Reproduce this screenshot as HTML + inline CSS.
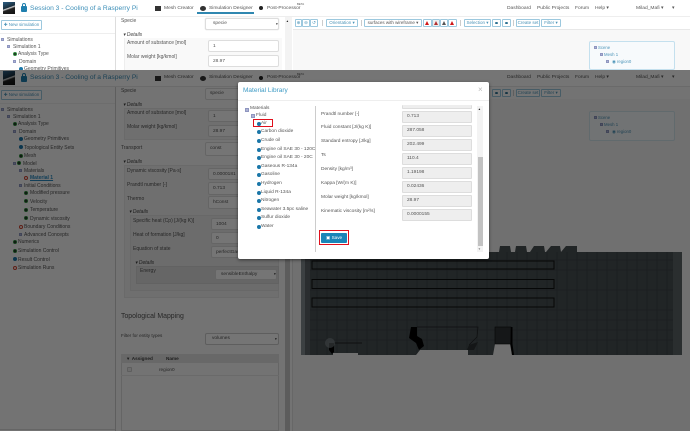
<!DOCTYPE html>
<html><head><meta charset="utf-8">
<style>
html,body{margin:0;padding:0;background:#fff}
#p{position:relative;width:690px;height:431px;overflow:hidden;background:#fff;font-family:"Liberation Sans",sans-serif;color:#555;filter:blur(.35px)}
#p div,#p span.t{position:absolute}
.t{white-space:nowrap;line-height:0;font-size:5px;color:#555}
.b{border:1px solid #9cc8de;background:#fff;box-sizing:border-box;border-radius:1px;height:8px;color:#4c94b8;font-size:4.5px;line-height:6px;text-align:center;white-space:nowrap;overflow:hidden}
.i{border:1px solid #ddd;background:#fff;box-sizing:border-box;border-radius:2px;font-size:4.8px;color:#555;white-space:nowrap;overflow:hidden;padding-left:4px}
.g{width:4px;height:4px;border-radius:50%;box-sizing:border-box;border:1.2px solid #2e8b3c;background:#222}
.bl{width:4px;height:4px;border-radius:50%;background:#1a76a8}
.r{width:4px;height:4px;border-radius:50%;box-sizing:border-box;border:1px solid #d0432f;background:transparent}
.s{width:3px;height:3px;background:#aeb4d4;border:.5px solid #8f96c0;box-sizing:border-box}
.f{border:1px solid #ddd;background:#eee;box-sizing:border-box;border-radius:1px;left:402px;width:70px;height:12px;font-size:4.8px;line-height:10px;color:#555;padding-left:4px}
.rd{border:1.5px solid #e0101c;box-sizing:border-box}
.tri{width:0;height:0;border-left:2.5px solid transparent;border-right:2.5px solid transparent;border-bottom:4px solid #d01818}
.dot{width:3px;height:2px;border-radius:50%;background:#2a6f90}
</style></head><body>
<div id="p">
<!-- shared top -->
<div style="left:0;top:0;width:690px;height:17px;background:#fff;border-bottom:1px solid #eee;box-sizing:border-box"></div>
<div style="left:3px;top:2px;width:12px;height:12px;background:linear-gradient(160deg,#2c5f86 0,#1a2e3c 45%,#ddd 50%,#222 60%,#111 100%)"></div>
<div style="left:21px;top:6px;width:6px;height:6px;background:#1f7fae;border-radius:1px"></div>
<div style="left:22px;top:3px;width:4px;height:4px;border:1px solid #1f7fae;border-bottom:0;box-sizing:border-box;border-radius:2px 2px 0 0"></div>
<span class="t" style="left:30px;top:8.5px;font-size:6.7px;color:#3d8fb8">Session 3 - Cooling of a Rasperry Pi</span>
<div style="left:155px;top:6px;width:6px;height:5px;background:#333"></div>
<span class="t" style="left:164px;top:8.5px;font-size:4.9px">Mesh Creator</span>
<div style="left:200px;top:6px;width:6px;height:5px;background:#333;border-radius:50%"></div>
<span class="t" style="left:209px;top:8.5px;font-size:4.9px">Simulation Designer</span>
<div style="left:197px;top:12px;width:57px;height:1.5px;background:#2f87b0"></div>
<div style="left:259px;top:6px;width:4px;height:4px;background:#222;border-radius:50%"></div>
<span class="t" style="left:267px;top:8.5px;font-size:4.9px">Post-Processor</span>
<span class="t" style="left:297px;top:3.5px;font-size:2.8px">BETA</span>
<span class="t" style="left:507px;top:8.5px;font-size:4.9px">Dashboard</span>
<span class="t" style="left:537px;top:8.5px;font-size:4.9px">Public Projects</span>
<span class="t" style="left:575px;top:8.5px;font-size:4.9px">Forum</span>
<span class="t" style="left:595px;top:8.5px;font-size:4.9px">Help ▾</span>
<span class="t" style="left:636px;top:8.5px;font-size:4.9px">Milad_Mafi ▾</span>
<span class="t" style="left:672px;top:8.5px;font-size:4.9px">▾</span>

<!-- upper panels -->
<div style="left:115px;top:17px;width:1px;height:53px;background:#ddd"></div>
<div style="left:0;top:33px;width:115px;height:1px;background:#eee"></div>
<div class="b" style="left:1px;top:20px;width:41px;height:10px;line-height:8px">✚ New simulation</div>
<div class="s" style="left:1px;top:38px"></div><span class="t" style="left:7px;top:40px">Simulations</span>
<div class="s" style="left:7px;top:45px"></div><span class="t" style="left:13px;top:46.5px">Simulation 1</span>
<div class="g" style="left:13px;top:52px"></div><span class="t" style="left:18px;top:54px">Analysis Type</span>
<div class="s" style="left:13px;top:60px"></div><span class="t" style="left:19px;top:61.5px">Domain</span>
<div class="bl" style="left:19px;top:67px"></div><span class="t" style="left:24px;top:69px">Geometry Primitives</span>
<span class="t" style="left:121px;top:21px">Specie</span>
<div class="i" style="left:205px;top:18px;width:74px;height:12px;line-height:10px;padding-left:2px;box-shadow:0 0 1px #ccc"><span style="margin-left:5px">specie</span></div>
<span class="t" style="left:276px;top:24px;font-size:3.5px;color:#222">▾</span>
<span class="t" style="left:123px;top:35px;font-style:italic;color:#444">▾ Details</span>
<div style="left:124px;top:38px;width:157px;height:32px;background:#f9f9f9;border-left:1px solid #eee"></div>
<span class="t" style="left:127px;top:43px">Amount of substance [mol]</span>
<div class="i" style="left:208px;top:40px;width:71px;height:12px;line-height:11px">1</div>
<span class="t" style="left:127px;top:57px">Molar weight [kg/kmol]</span>
<div class="i" style="left:208px;top:55px;width:71px;height:12px;line-height:11px">28.97</div>
<div style="left:285px;top:17px;width:7px;height:53px;background:#f3f3f3"></div>
<span class="t" style="left:286.5px;top:21px;font-size:3.5px;color:#222">▴</span>
<div style="left:293px;top:29px;width:397px;height:41px;background:#f8f8f8;border-top:1px solid #e8e8e8"></div>

<!-- toolbar -->
<div class="b" style="left:295px;top:19px;width:7px">⊕</div>
<div class="b" style="left:302px;top:19px;width:8px">⊖</div>
<div class="b" style="left:310px;top:19px;width:8px">↺</div>
<div style="left:322px;top:20px;width:1px;height:6px;background:#ccc"></div>
<div class="b" style="left:326px;top:19px;width:32px">Orientation ▾</div>
<div style="left:361px;top:20px;width:1px;height:6px;background:#ccc"></div>
<div class="b" style="left:364px;top:19px;width:58px;color:#555">surfaces with wireframe ▾</div>
<div class="b" style="left:423px;top:19px;width:9px"></div><div class="tri" style="left:425px;top:21px"></div>
<div class="b" style="left:432px;top:19px;width:8px;background:#eee"></div><div class="tri" style="left:433.500px;top:21px;border-bottom-color:#b03030"></div>
<div class="b" style="left:440px;top:19px;width:8px"></div><div class="tri" style="left:441.500px;top:21px;border-bottom-color:#555"></div>
<div class="b" style="left:448px;top:19px;width:9px"></div><div class="tri" style="left:450px;top:21px"></div>
<div style="left:460px;top:20px;width:1px;height:6px;background:#ccc"></div>
<div class="b" style="left:464px;top:19px;width:27px">Selection ▾</div>
<div class="b" style="left:492px;top:19px;width:9px"></div><div class="dot" style="left:495px;top:22px"></div>
<div class="b" style="left:502px;top:19px;width:9px"></div><div class="dot" style="left:505px;top:22px"></div>
<div style="left:513px;top:20px;width:1px;height:6px;background:#ccc"></div>
<div class="b" style="left:516px;top:19px;width:24px">Create set</div>
<div class="b" style="left:541px;top:19px;width:20px">Filter ▾</div>
<!-- scene -->
<div style="left:589px;top:41px;width:86px;height:29px;background:#f7fafc;border:1px solid #c4e0ee;box-sizing:border-box;border-radius:2px"></div>
<div class="s" style="left:594px;top:46px"></div><span class="t" style="left:598px;top:48px;font-size:4.3px;color:#4c94b8">Scene</span>
<div class="s" style="left:600px;top:53px"></div><span class="t" style="left:604px;top:55px;font-size:4.3px;color:#4c94b8">Mesh 1</span>
<div class="s" style="left:606px;top:60px"></div><span class="t" style="left:612px;top:62px;font-size:4.3px;color:#4c94b8">◉ region0</span>

<!-- lower layer base -->
<div style="left:0;top:70px;width:690px;height:361px;background:#fbfbfb"></div>
<div style="left:0;top:70px;width:690px;height:17px;background:#fff;border-bottom:1px solid #e8e8e8;box-sizing:border-box"></div>
<div style="left:3px;top:71px;width:12px;height:14px;background:linear-gradient(160deg,#2c5f86 0,#1a2e3c 45%,#ddd 50%,#222 60%,#111 100%)"></div>
<div style="left:21px;top:76px;width:6px;height:6px;background:#1f7fae;border-radius:1px"></div>
<div style="left:22px;top:73px;width:4px;height:4px;border:1px solid #1f7fae;border-bottom:0;box-sizing:border-box;border-radius:2px 2px 0 0"></div>
<span class="t" style="left:30px;top:78px;font-size:6.7px;color:#3d8fb8">Session 3 - Cooling of a Rasperry Pi</span>
<div style="left:155px;top:76px;width:6px;height:5px;background:#333"></div>
<span class="t" style="left:164px;top:78px;font-size:4.9px">Mesh Creator</span>
<div style="left:200px;top:76px;width:6px;height:5px;background:#333;border-radius:50%"></div>
<span class="t" style="left:209px;top:78px;font-size:4.9px">Simulation Designer</span>
<div style="left:259px;top:76px;width:4px;height:4px;background:#222;border-radius:50%"></div>
<span class="t" style="left:267px;top:78px;font-size:4.9px">Post-Processor</span>
<span class="t" style="left:297px;top:73.5px;font-size:2.8px">BETA</span>
<span class="t" style="left:507px;top:78px;font-size:4.9px">Dashboard</span>
<span class="t" style="left:537px;top:78px;font-size:4.9px">Public Projects</span>
<span class="t" style="left:575px;top:78px;font-size:4.9px">Forum</span>
<span class="t" style="left:595px;top:78px;font-size:4.9px">Help ▾</span>
<span class="t" style="left:636px;top:78px;font-size:4.9px">Milad_Mafi ▾</span>
<span class="t" style="left:672px;top:78px;font-size:4.9px">▾</span>
<div style="left:115px;top:87px;width:1px;height:344px;background:#ccc"></div>
<div style="left:0;top:103px;width:115px;height:1px;background:#eee"></div>
<div style="left:0;top:429px;width:115px;height:1px;background:#ddd"></div>
<div class="b" style="left:1px;top:90px;width:41px;height:10px;line-height:8px">✚ New simulation</div>

<!-- lower tree -->
<div class="s" style="left:1px;top:108px"></div><span class="t" style="left:7px;top:109.5px">Simulations</span>
<div class="s" style="left:7px;top:115px"></div><span class="t" style="left:13px;top:116.5px">Simulation 1</span>
<div class="g" style="left:13px;top:122px"></div><span class="t" style="left:18px;top:124px">Analysis Type</span>
<div class="s" style="left:13px;top:130px"></div><span class="t" style="left:19px;top:131.5px">Domain</span>
<div class="bl" style="left:19px;top:137px"></div><span class="t" style="left:24px;top:139px">Geometry Primitives</span>
<div class="bl" style="left:19px;top:145px"></div><span class="t" style="left:24px;top:147.5px">Topological Entity Sets</span>
<div class="g" style="left:19px;top:154px"></div><span class="t" style="left:24px;top:156px">Mesh</span>
<div class="s" style="left:13px;top:162px"></div><div class="g" style="left:17px;top:161px"></div><span class="t" style="left:23px;top:163.5px">Model</span>
<div class="s" style="left:19px;top:169px"></div><span class="t" style="left:24px;top:170.5px">Materials</span>
<div class="r" style="left:24px;top:176px"></div><span class="t" style="left:30px;top:178px;font-weight:bold;color:#2a8ac0;text-decoration:underline">Material 1</span>
<div class="s" style="left:19px;top:184px"></div><span class="t" style="left:24px;top:185.5px">Initial Conditions</span>
<div class="g" style="left:24px;top:191px"></div><span class="t" style="left:30px;top:193px">Modified pressure</span>
<div class="g" style="left:24px;top:199px"></div><span class="t" style="left:30px;top:201.5px">Velocity</span>
<div class="g" style="left:24px;top:208px"></div><span class="t" style="left:30px;top:210px">Temperature</span>
<div class="g" style="left:24px;top:216px"></div><span class="t" style="left:30px;top:218.5px">Dynamic viscosity</span>
<div class="r" style="left:19px;top:225px"></div><span class="t" style="left:24px;top:227px">Boundary Conditions</span>
<div class="s" style="left:19px;top:233px"></div><span class="t" style="left:24px;top:234.5px">Advanced Concepts</span>
<div class="g" style="left:13px;top:240px"></div><span class="t" style="left:18px;top:242px">Numerics</span>
<div class="g" style="left:13px;top:249px"></div><span class="t" style="left:18px;top:251px">Simulation Control</span>
<div class="bl" style="left:13px;top:257px"></div><span class="t" style="left:18px;top:259.5px">Result Control</span>
<div class="r" style="left:13px;top:266px"></div><span class="t" style="left:18px;top:268px">Simulation Runs</span>

<!-- lower mid panel -->
<span class="t" style="left:121px;top:91px">Specie</span>
<div class="i" style="left:205px;top:88px;width:74px;height:12px;line-height:10px">specie</div>
<span class="t" style="left:123px;top:104.5px;font-style:italic;color:#444">▾ Details</span>
<div style="left:124px;top:108px;width:157px;height:32px;background:#f2f2f2;border:1px solid #e8e8e8;box-sizing:border-box"></div>
<span class="t" style="left:127px;top:113px">Amount of substance [mol]</span>
<div class="i" style="left:208px;top:110px;width:71px;height:12px;line-height:11px">1</div>
<span class="t" style="left:127px;top:127px">Molar weight [kg/kmol]</span>
<div class="i" style="left:208px;top:125px;width:71px;height:12px;line-height:11px">28.97</div>
<span class="t" style="left:121px;top:148px">Transport</span>
<div class="i" style="left:205px;top:142px;width:74px;height:14px;line-height:12px">const</div>
<span class="t" style="left:123px;top:162px;font-style:italic;color:#444">▾ Details</span>
<div style="left:124px;top:165px;width:155px;height:133px;background:#f2f2f2;border:1px solid #e8e8e8;box-sizing:border-box"></div>
<span class="t" style="left:127px;top:171px">Dynamic viscosity [Pa·s]</span>
<div class="i" style="left:208px;top:168px;width:71px;height:12px;line-height:11px">0.0000181</div>
<span class="t" style="left:127px;top:185px">Prandtl number [-]</span>
<div class="i" style="left:208px;top:182px;width:71px;height:13px;line-height:11px">0.713</div>
<span class="t" style="left:127px;top:199px">Thermo</span>
<div class="i" style="left:208px;top:196px;width:71px;height:13px;line-height:11px">hConst</div>
<span class="t" style="left:129px;top:212px;font-style:italic;color:#444">▾ Details</span>
<div style="left:130px;top:215px;width:149px;height:76px;background:#ebebeb;border:1px solid #e2e2e2;box-sizing:border-box"></div>
<span class="t" style="left:133px;top:221px">Specific heat (Cp) [J/(kg K)]</span>
<div class="i" style="left:211px;top:218px;width:68px;height:12px;line-height:11px">1004</div>
<span class="t" style="left:133px;top:235px">Heat of formation [J/kg]</span>
<div class="i" style="left:211px;top:232px;width:68px;height:12px;line-height:11px">0</div>
<span class="t" style="left:133px;top:249px">Equation of state</span>
<div class="i" style="left:211px;top:246px;width:68px;height:12px;line-height:11px">perfectGas</div>
<span class="t" style="left:135px;top:263px;font-style:italic;color:#444">▾ Details</span>
<div style="left:136px;top:266px;width:143px;height:18px;background:#dedede;border:1px solid #d6d6d6;box-sizing:border-box"></div>
<span class="t" style="left:140px;top:271px">Energy</span>
<div class="i" style="left:215px;top:269px;width:62px;height:11px;line-height:9px;padding-left:5px">sensibleEnthalpy</div>
<span class="t" style="left:274px;top:274px;font-size:3.5px;color:#111">▾</span>
<span class="t" style="left:121px;top:317px;font-size:6.9px">Topological Mapping</span>
<span class="t" style="left:121px;top:336px;font-size:4.6px">Filter for entity types</span>
<div class="i" style="left:205px;top:333px;width:74px;height:12px;line-height:10px;padding-left:6px;border-color:#ccc">volumes</div>
<span class="t" style="left:275px;top:339px;font-size:3.5px;color:#111">▾</span>
<div style="left:121px;top:354px;width:158px;height:77px;background:#fafafa;border:1px solid #ddd;box-sizing:border-box"></div>
<div style="left:121px;top:354px;width:158px;height:9px;background:#e2e2e2"></div>
<span class="t" style="left:127px;top:358.5px;font-size:4.7px;font-weight:bold;color:#444">▾&nbsp; Assigned</span>
<span class="t" style="left:166px;top:358.5px;font-size:4.7px;font-weight:bold;color:#444">Name</span>
<div style="left:127px;top:367px;width:5px;height:5px;background:#eee;border:1px solid #ccc;box-sizing:border-box;border-radius:1px"></div>
<span class="t" style="left:159px;top:369.5px;font-size:4.7px">region0</span>
<div style="left:121px;top:375px;width:158px;height:1px;background:#e6e6e6"></div>
<div style="left:285px;top:87px;width:5px;height:344px;background:#c8c8c8"></div>
<div style="left:292px;top:87px;width:1px;height:344px;background:#e0e0e0"></div>
<div style="left:293px;top:99px;width:397px;height:332px;background:#f4f4f4"></div>
<!-- lower toolbar visible -->
<div class="b" style="left:492px;top:89px;width:9px"></div><div class="dot" style="left:495px;top:92px"></div>
<div class="b" style="left:502px;top:89px;width:9px"></div><div class="dot" style="left:505px;top:92px"></div>
<div style="left:513px;top:90px;width:1px;height:6px;background:#ccc"></div>
<div class="b" style="left:516px;top:89px;width:24px">Create set</div>
<div class="b" style="left:541px;top:89px;width:20px">Filter ▾</div>
<div style="left:589px;top:111px;width:86px;height:30px;background:#f7fafc;border:1px solid #d4e6ee;box-sizing:border-box;border-radius:2px"></div>
<div class="s" style="left:594px;top:116px"></div><span class="t" style="left:598px;top:118px;font-size:4.3px;color:#4c94b8">Scene</span>
<div class="s" style="left:600px;top:123px"></div><span class="t" style="left:604px;top:125px;font-size:4.3px;color:#4c94b8">Mesh 1</span>
<div class="s" style="left:606px;top:130px"></div><span class="t" style="left:612px;top:132px;font-size:4.3px;color:#4c94b8">◉ region0</span>

<!-- overlay -->
<div style="left:0;top:70px;width:690px;height:361px;background:rgba(0,0,0,.54)"></div>

<!-- 3D model -->
<svg style="position:absolute;left:0;top:0" width="690" height="431" viewBox="0 0 690 431">
<defs><clipPath id="c"><path d="M301 252H499L500 246H510L511 252H515L516 246H526L527 252H530L534 246H544L545 252H546L551 246H560L561 252H561L566 246H577V252H682V355H512L510 344H495L493 355H468V350H420L416 355H358V353H333V355H301Z"/></clipPath></defs>
<path fill="#212526" d="M301 252H499L500 246H510L511 252H515L516 246H526L527 252H530L534 246H544L545 252H546L551 246H560L561 252H561L566 246H577V252H682V355H512L510 344H495L493 355H468V350H420L416 355H358V353H333V355H301Z"/>
<g clip-path="url(#c)">
<path d="M317 252V355M327 252V355M337 252V355M347 252V355M357 252V355M367 252V355M377 252V355M387 252V355M397 252V355M407 252V355M417 252V355M427 252V355M437 252V355M447 252V355M457 252V355M467 252V355M477 252V355M487 252V355M497 252V355M507 252V355M517 252V355M527 252V355M537 252V355M547 252V355M557 252V355M567 252V355M577 252V355M587 252V355M597 252V355M607 252V355M617 252V355M627 252V355M637 252V355M647 252V355M657 252V355M667 252V355M310 260H673M310 270H673M310 290H673M310 310H673M310 320H673M310 330H673M310 340H673" stroke="#1a1d1e" stroke-width=".6" fill="none"/>
<rect x="301" y="252" width="4" height="103" fill="#3c4042"/>
<rect x="305" y="252" width="5" height="103" fill="#2a2d2f"/>
<rect x="673" y="252" width="9" height="103" fill="#2a2e2f"/>
</g>
<g fill="none" stroke="#060707" stroke-width="1">
<rect x="312" y="261" width="242" height="8"/>
<rect x="312" y="279.500" width="242" height="9"/>
<rect x="312" y="298" width="242" height="9"/>
</g>
<path d="M334 343H362" stroke="#0a0a0a" stroke-width=".8" fill="none"/>
<path d="M417 327H478L477 337L469 345" stroke="#0e0f10" stroke-width=".7" fill="none"/>
<path d="M417 327H411L409 338L416 343L419 350L424 346L422 339L417 336Z" fill="#000"/>
<path d="M469 345L467 350H474L478 342Z" fill="#141617"/>
<rect x="495" y="327" width="16" height="17" fill="#151718" stroke="#060606" stroke-width=".6"/>
<path d="M511 327H512.500V344L514 355H512L510.500 344Z" fill="#000"/>
<path d="M329 343H334V352L332 354L329 350Z" fill="#000"/>
<circle cx="330" cy="343" r="5" fill="#3e4244" opacity=".6"/>
</svg>

<!-- modal -->
<div style="left:238px;top:82px;width:251px;height:177px;background:#fff;border-radius:2px;box-shadow:0 1px 3px rgba(0,0,0,.5)"></div>
<div style="left:238px;top:100px;width:251px;height:1px;background:#eee"></div>
<span class="t" style="left:243px;top:90.5px;font-size:6.5px;color:#3d9ac4">Material Library</span>
<span class="t" style="left:478px;top:90px;font-size:8px;color:#bbb">×</span>
<div class="s" style="left:245px;top:108px;width:4px;height:4px"></div><span class="t" style="left:250px;top:109px;font-size:4.8px">Materials</span>
<div class="s" style="left:251px;top:114px;width:4px;height:4px"></div><span class="t" style="left:256px;top:115.5px;font-size:4.8px">Fluid</span>
<div class="rd" style="left:253px;top:119px;width:20px;height:8px"></div>
<div class="bl" style="left:256.500px;top:121.500px"></div><span class="t" style="left:261px;top:123.500px;font-size:4.8px">Air</span>
<div class="bl" style="left:256.500px;top:130px"></div><span class="t" style="left:261px;top:132px;font-size:4.8px">Carbon dioxide</span>
<div class="bl" style="left:256.500px;top:139px"></div><span class="t" style="left:261px;top:141px;font-size:4.8px">Crude oil</span>
<div class="bl" style="left:256.500px;top:147.500px"></div><span class="t" style="left:261px;top:149.500px;font-size:4.8px">Engine oil SAE 30 - 120C</span>
<div class="bl" style="left:256.500px;top:156px"></div><span class="t" style="left:261px;top:158px;font-size:4.8px">Engine oil SAE 30 - 20C</span>
<div class="bl" style="left:256.500px;top:165px"></div><span class="t" style="left:261px;top:167px;font-size:4.8px">Gaseous R-134a</span>
<div class="bl" style="left:256.500px;top:173px"></div><span class="t" style="left:261px;top:175px;font-size:4.8px">Gasoline</span>
<div class="bl" style="left:256.500px;top:182px"></div><span class="t" style="left:261px;top:184px;font-size:4.8px">Hydrogen</span>
<div class="bl" style="left:256.500px;top:190.500px"></div><span class="t" style="left:261px;top:192.500px;font-size:4.8px">Liquid R-134a</span>
<div class="bl" style="left:256.500px;top:199px"></div><span class="t" style="left:261px;top:201px;font-size:4.8px">Nitrogen</span>
<div class="bl" style="left:256.500px;top:208px"></div><span class="t" style="left:261px;top:210px;font-size:4.8px">Seawater 3.5pc saline</span>
<div class="bl" style="left:256.500px;top:216px"></div><span class="t" style="left:261px;top:218px;font-size:4.8px">Sulfur dioxide</span>
<div class="bl" style="left:256.500px;top:225px"></div><span class="t" style="left:261px;top:227px;font-size:4.8px">Water</span>
<div style="left:315px;top:106px;width:1px;height:146px;background:#ccc"></div>
<div class="f" style="top:105px;height:4px;border-top:0"></div>
<span class="t" style="left:321px;top:114.500px;font-size:4.8px">Prandtl number [-]</span><div class="f" style="top:111px">0.713</div>
<span class="t" style="left:321px;top:128px;font-size:4.8px">Fluid constant [J/(kg K)]</span><div class="f" style="top:125px">287.058</div>
<span class="t" style="left:321px;top:142px;font-size:4.8px">Standard entropy [J/kg]</span><div class="f" style="top:139px">202.499</div>
<span class="t" style="left:321px;top:156px;font-size:4.8px">Ts</span><div class="f" style="top:153px">110.4</div>
<span class="t" style="left:321px;top:170px;font-size:4.8px">Density [kg/m³]</span><div class="f" style="top:167px">1.19198</div>
<span class="t" style="left:321px;top:184px;font-size:4.8px">Kappa [W/(m K)]</span><div class="f" style="top:181px">0.02436</div>
<span class="t" style="left:321px;top:198px;font-size:4.8px">Molar weight [kg/kmol]</span><div class="f" style="top:195px">28.97</div>
<span class="t" style="left:321px;top:212px;font-size:4.8px">Kinematic viscosity [m²/s]</span><div class="f" style="top:209px">0.0000155</div>
<div class="rd" style="left:319px;top:230px;width:30px;height:15px;border-width:1.5px"></div>
<div style="left:321px;top:233px;width:26px;height:10px;background:#1a85b8;color:#fff;font-size:4.6px;line-height:10px;text-align:center;border-radius:1px">▣ Save</div>
<div style="left:477px;top:106px;width:6px;height:146px;background:#f3f3f3"></div>
<div style="left:478px;top:157px;width:5px;height:89px;background:#c2c2c2"></div>
<span class="t" style="left:478.500px;top:109px;font-size:3.5px;color:#222">▴</span>
<span class="t" style="left:478.500px;top:249px;font-size:3.5px;color:#888">▾</span>
</div>
</body></html>
